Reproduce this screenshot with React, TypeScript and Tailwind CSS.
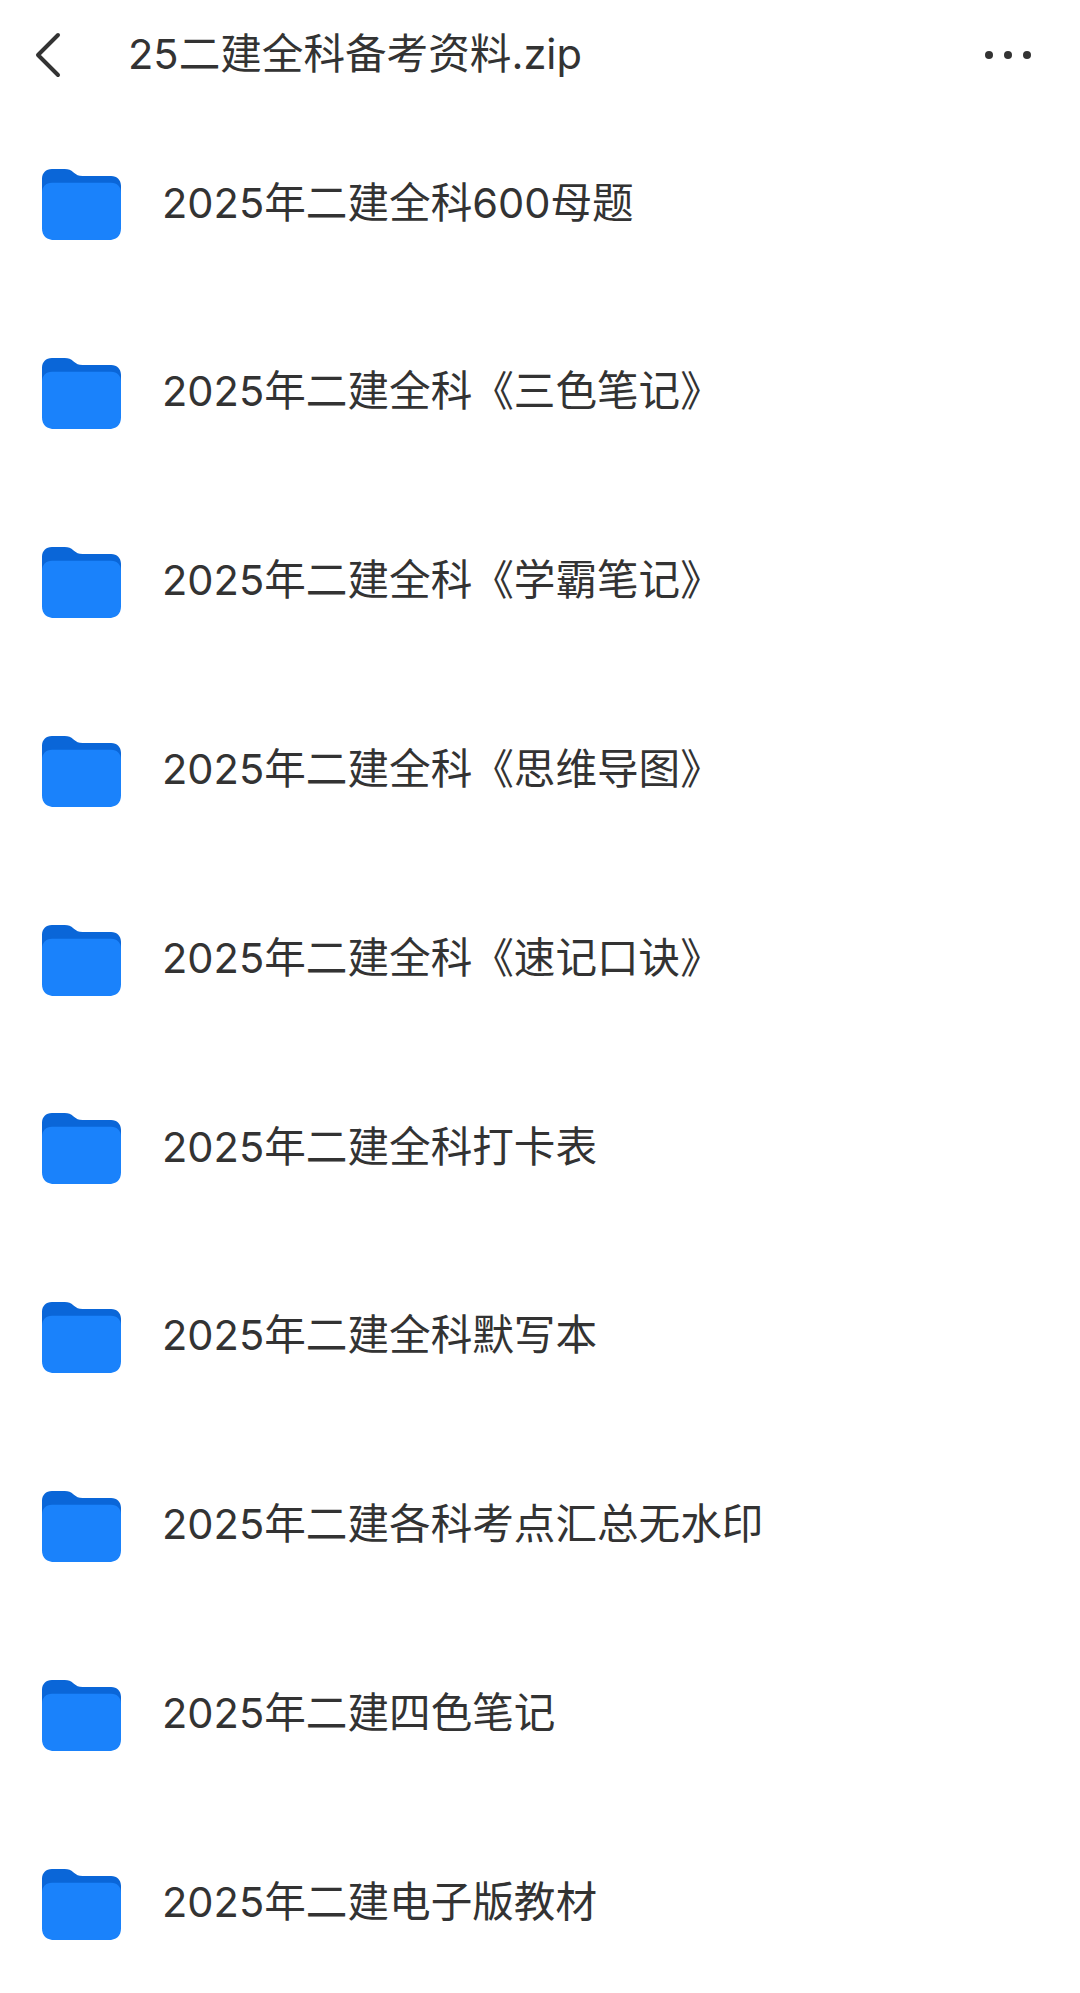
const FILES = [
  "2025年二建全科600母题",
  "2025年二建全科《三色笔记》",
  "2025年二建全科《学霸笔记》",
  "2025年二建全科《思维导图》",
  "2025年二建全科《速记口诀》",
  "2025年二建全科打卡表",
  "2025年二建全科默写本",
  "2025年二建各科考点汇总无水印",
  "2025年二建四色笔记",
  "2025年二建电子版教材",
];

function FolderIcon() {
  return (
    <svg width="79" height="72" viewBox="0 0 80 73" preserveAspectRatio="none" className="shrink-0 mt-[2px]">
      <path
        d="M0 10C0 4 4 0 10 0H23C27 0 29 1 32 3.5C35 6 37 7 41 7H70C76 7 80 11 80 17V40H0Z"
        fill="#0a66d8"
      />
      <path
        d="M0 24C0 18 4 14 10 14H70C76 14 80 18 80 24V60C80 68 75 72 67 72H13C5 72 0 68 0 60Z"
        fill="#1a82fb"
      />
    </svg>
  );
}

export default function App() {
  return (
    <div
      className="w-[1080px] h-[1993px] overflow-hidden bg-white text-[#333333]"
      style={{ fontFamily: 'Inter, "Noto Sans CJK SC", sans-serif' }}
    >
      <header className="flex items-center h-[110px] pl-[35px] pr-[49px]">
        <svg width="26" height="46" viewBox="0 0 26 46" fill="none" className="shrink-0">
          <path d="M23 3L3 23L23 43" stroke="#333333" strokeWidth="4" strokeLinecap="round" strokeLinejoin="round" />
        </svg>
        <h1 className="ml-[67px] text-[41.6px] font-normal leading-none">25二建全科备考资料.zip</h1>
        <div className="ml-auto flex gap-[11px]">
          <span className="w-[8px] h-[8px] rounded-full bg-[#333333]" />
          <span className="w-[8px] h-[8px] rounded-full bg-[#333333]" />
          <span className="w-[8px] h-[8px] rounded-full bg-[#333333]" />
        </div>
      </header>
      <ul>
        {FILES.map((name) => (
          <li key={name} className="flex items-center h-[188.8px] pl-[42px]">
            <FolderIcon />
            <span className="ml-[41px] text-[41.6px] font-normal leading-none pb-[2px]">{name}</span>
          </li>
        ))}
      </ul>
    </div>
  );
}
